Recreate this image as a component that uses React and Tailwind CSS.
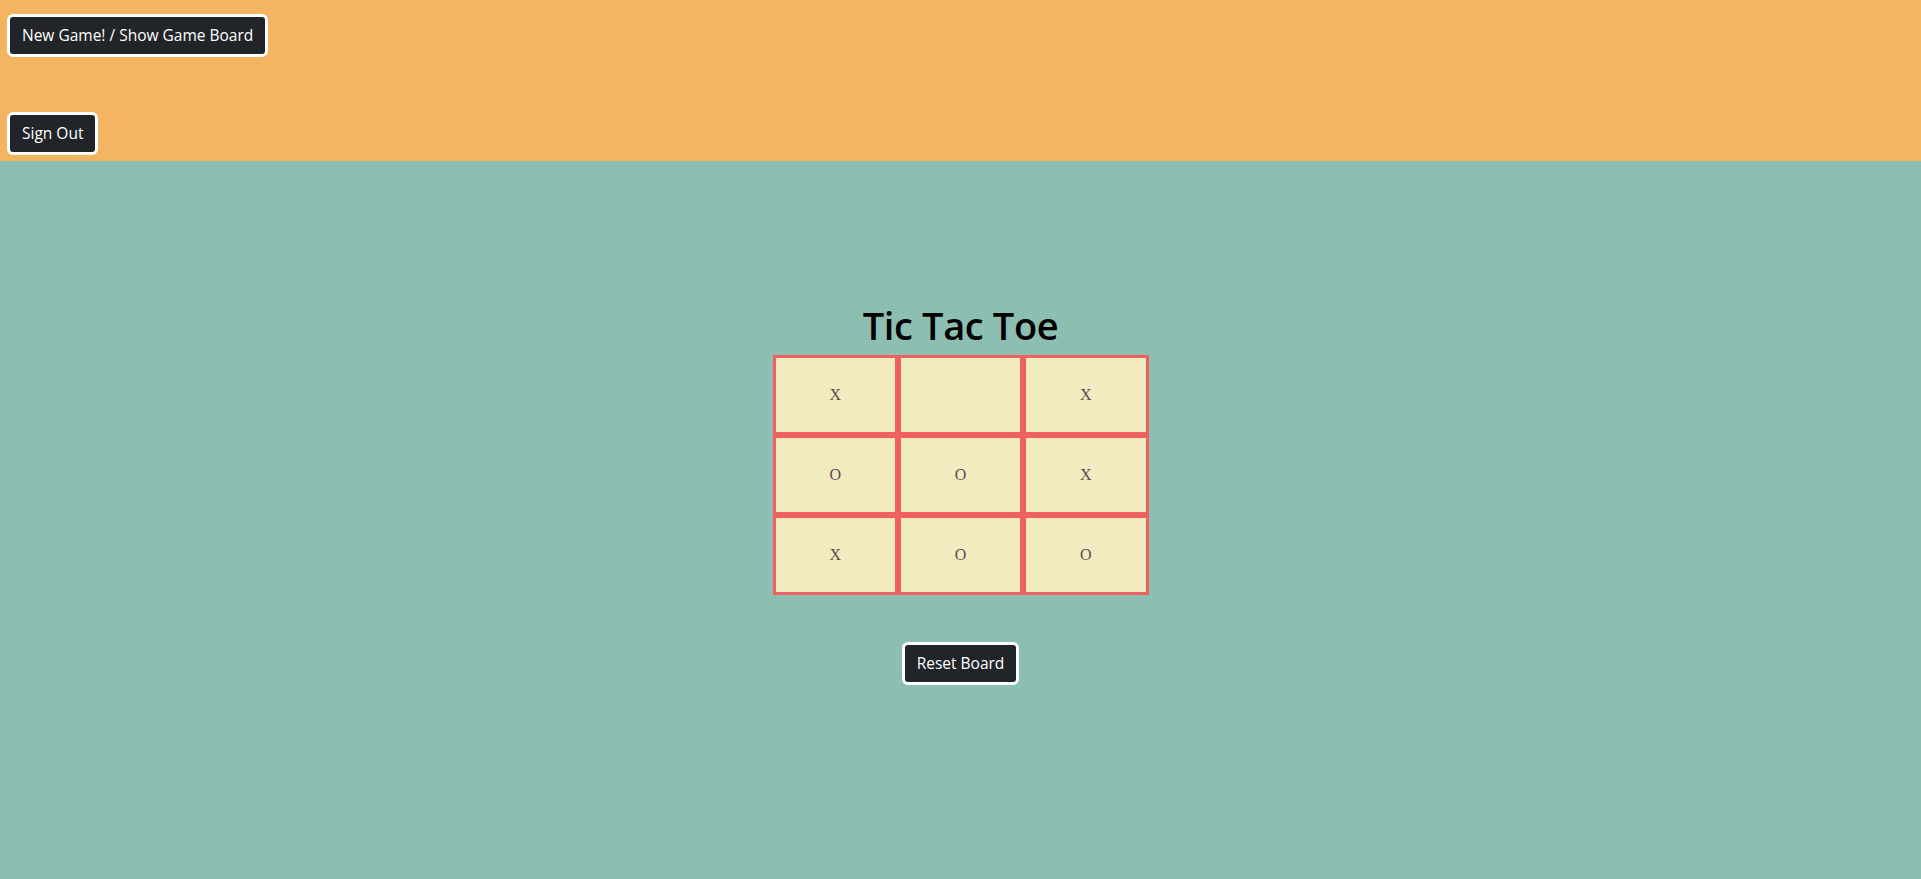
import React, { useState } from "react";

const initialBoard = ["x", "", "x", "o", "o", "x", "x", "o", "o"];

const btn =
  "rounded-md border-[3px] border-white bg-[#212529] px-3 py-1.5 text-[15.5px] leading-[25px] text-white";

export default function App() {
  const [board, setBoard] = useState(initialBoard);

  return (
    <div className="min-h-[879px] bg-[#8cbeb2] font-['Open_Sans',sans-serif]">
      {/* Top bar */}
      <div className="flex h-[161px] flex-col items-start bg-[#f3b562] px-[7px] pt-[14px]">
        <button className={btn}>New Game! / Show Game Board</button>
        <button className={`${btn} mt-[55px]`}>Sign Out</button>
      </div>

      {/* Game */}
      <div className="flex flex-col items-center pt-[140px]">
        <h1 className="mb-[6px] text-[38px] font-semibold leading-[48px] tracking-[-0.01em] text-black">
          Tic Tac Toe
        </h1>
        <div className="grid w-[376px] grid-cols-3">
          {board.map((cell, i) => (
            <div
              key={i}
              className="flex h-[80px] items-center justify-center border-[3px] border-[#f06060] bg-[#f2ebbf] font-['Liberation_Serif',serif] text-base uppercase text-[#5c4b51]"
            >
              {cell}
            </div>
          ))}
        </div>
        <button className={`${btn} mt-[47px]`} onClick={() => setBoard(Array(9).fill(""))}>
          Reset Board
        </button>
      </div>
    </div>
  );
}
